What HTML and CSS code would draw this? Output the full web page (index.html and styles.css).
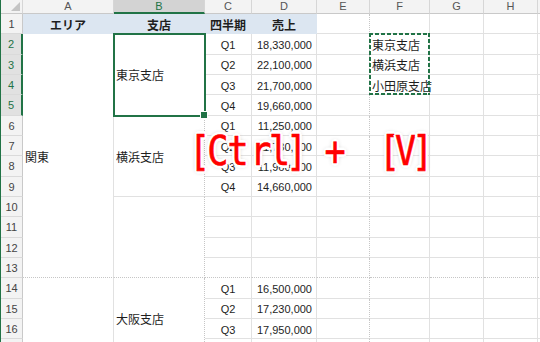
FILE: index.html
```html
<!DOCTYPE html>
<html lang="ja">
<head>
<meta charset="utf-8">
<title>Excel 貼り付け</title>
<link rel="stylesheet" href="styles.css">
</head>
<body>
<div class="sheet">
  <div class="ch corner"></div><div class="ch">A</div><div class="ch on">B</div><div class="ch">C</div><div class="ch">D</div><div class="ch">E</div><div class="ch">F</div><div class="ch">G</div><div class="ch">H</div><div class="ch"></div>

  <div class="rh">1</div><div class="hd">エリア</div><div class="hd">支店</div><div class="hd">四半期</div><div class="hd">売上</div><div class="e"></div><div></div><div></div><div></div><div></div>

  <div class="rh on">2</div><div class="m12 r13">関東</div><div class="m4 b sel">東京支店</div><div class="q">Q1</div><div class="n">18,330,000</div><div class="e"></div><div class="copy">東京支店</div><div></div><div></div><div></div>
  <div class="rh on">3</div><div class="q">Q2</div><div class="n">22,100,000</div><div class="e"></div><div>横浜支店</div><div></div><div></div><div></div>
  <div class="rh on">4</div><div class="q">Q3</div><div class="n">21,700,000</div><div class="e"></div><div>小田原支店</div><div></div><div></div><div></div>
  <div class="rh on">5</div><div class="q">Q4</div><div class="n">19,660,000</div><div class="e"></div><div></div><div></div><div></div><div></div>

  <div class="rh">6</div><div class="m4 b">横浜支店</div><div class="q">Q1</div><div class="n">11,250,000</div><div class="e"></div><div></div><div></div><div></div><div></div>
  <div class="rh">7</div><div class="q">Q2</div><div class="n">11,730,000</div><div class="e"></div><div></div><div></div><div></div><div></div>
  <div class="rh">8</div><div class="q">Q3</div><div class="n">11,960,000</div><div class="e"></div><div></div><div></div><div></div><div></div>
  <div class="rh">9</div><div class="q">Q4</div><div class="n">14,660,000</div><div class="e"></div><div></div><div></div><div></div><div></div>

  <div class="rh">10</div><div class="m4 b r13"></div><div></div><div></div><div class="e"></div><div></div><div></div><div></div><div></div>
  <div class="rh">11</div><div></div><div></div><div class="e"></div><div></div><div></div><div></div><div></div>
  <div class="rh">12</div><div></div><div></div><div class="e"></div><div></div><div></div><div></div><div></div>
  <div class="rh">13</div><div class="r13"></div><div class="r13"></div><div class="e r13"></div><div class="r13"></div><div class="r13"></div><div class="r13"></div><div class="r13"></div>

  <div class="rh">14</div><div class="m4"></div><div class="m4 b">大阪支店</div><div class="q">Q1</div><div class="n">16,500,000</div><div class="e"></div><div></div><div></div><div></div><div></div>
  <div class="rh">15</div><div class="q">Q2</div><div class="n">17,230,000</div><div class="e"></div><div></div><div></div><div></div><div></div>
  <div class="rh">16</div><div class="q">Q3</div><div class="n">17,950,000</div><div class="e"></div><div></div><div></div><div></div><div></div>
  <div class="rh"></div><div class="q"></div><div class="n"></div><div class="e"></div><div></div><div></div><div></div><div></div>
</div>

<div class="keys" aria-label="[Ctrl] + [V]"><span class="w18">[</span><span class="w20">C</span><span class="w23">t</span><span class="w19">r</span><span class="w17">l</span><span class="w15">]</span><span class="plus">+</span><span class="w16 gap">[</span><span class="w17">V</span><span class="w16">]</span></div>
</body>
</html>
```

FILE: styles.css
```css
* { box-sizing: border-box; }
html, body { margin: 0; }
body {
  width: 540px;
  height: 342px;
  overflow: hidden;
  position: relative;
  background: #fff;
  font-family: "Noto Sans CJK JP", sans-serif;
  font-size: 12px;
  color: #1e1e1e;
}

.sheet {
  display: grid;
  grid-template-columns: 22px 91px 91px 47px 65px 53px 60px 54px 54px 1fr;
  grid-template-rows: 14px;
  grid-auto-rows: 20.33px;
  border-left: 1px solid #217346;
}
.sheet > div {
  display: flex;
  align-items: center;
  white-space: nowrap;
  padding: 2px 2px 0;
  line-height: 1;
  border-right: 1px solid #e1e1e1;
  border-bottom: 1px solid #e1e1e1;
}

/* column headers */
.sheet > .ch {
  justify-content: center;
  padding: 0;
  background: #f3f3f3;
  border-right-color: #d6d6d6;
  border-bottom-color: #c9c9c9;
  font-family: "Liberation Sans", sans-serif;
  font-size: 11px;
  color: #555;
}
.sheet > .ch.on {
  background: #d3d3d3;
  color: #217346;
  border-bottom: 2px solid #217346;
}
.sheet > .corner { position: relative; }
.corner::after {
  content: "";
  position: absolute;
  right: 2px;
  bottom: 2px;
  width: 0;
  height: 0;
  border-left: 9px solid transparent;
  border-bottom: 9px solid #c4c4c4;
}

/* row headers */
.sheet > .rh {
  justify-content: center;
  padding: 2px 0 0;
  background: #f3f3f3;
  border-right-color: #c9c9c9;
  border-bottom-color: #dadada;
  font-family: "Liberation Sans", sans-serif;
  font-size: 11px;
  color: #444;
}
.sheet > .rh.on {
  background: #e1e1e1;
  color: #217346;
  border-right: 2px solid #217346;
}

/* heading row */
.sheet > .hd {
  justify-content: center;
  background: #dce6f1;
  border-color: #dce6f1;
  font-weight: bold;
  padding-top: 3px;
}

/* merged cells */
.m12 { grid-row: span 12; }
.m4 { grid-row: span 4; }

.sheet > .q {
  justify-content: center;
  font-family: "Liberation Sans", sans-serif;
  font-size: 11px;
  padding-top: 3px;
}
.sheet > .n {
  justify-content: flex-end;
  padding: 3px 4px 0 0;
  font-family: "Liberation Sans", sans-serif;
  font-size: 11px;
}

/* page breaks */
.sheet > .b, .sheet > .e { border-right: 1px dotted #c6c6c6; }
.sheet > .r13 { border-bottom: 1px dotted #c6c6c6; }

/* selection B2:B5 */
.sheet > .sel {
  position: relative;
  z-index: 2;
  outline: 2px solid #217346;
  outline-offset: -1px;
}
.sel::after {
  content: "";
  position: absolute;
  right: -4px;
  bottom: -4px;
  width: 6px;
  height: 6px;
  background: #217346;
  border: 1px solid #fff;
}

/* copy marquee F2:F4 */
.sheet > .copy { position: relative; }
.copy::before {
  content: "";
  position: absolute;
  left: -1px;
  top: -1px;
  width: 61px;
  height: 62px;
  z-index: 2;
  background:
    repeating-linear-gradient(90deg, #217346 0 4px, transparent 4px 6px) top / 100% 2px no-repeat,
    repeating-linear-gradient(90deg, #217346 0 4px, transparent 4px 6px) bottom / 100% 2px no-repeat,
    repeating-linear-gradient(180deg, #217346 0 4px, transparent 4px 6px) left / 2px 100% no-repeat,
    repeating-linear-gradient(180deg, #217346 0 4px, transparent 4px 6px) right / 2px 100% no-repeat;
}

/* shortcut overlay */
.keys {
  position: absolute;
  left: 188px;
  top: 131px;
  z-index: 5;
  display: flex;
  font-family: "DejaVu Sans Mono", monospace;
  font-size: 40px;
  line-height: 40px;
  color: #f00;
  -webkit-text-stroke: 0.6px #f00;
  text-shadow:
    3px 0 #fff, -3px 0 #fff, 0 3px #fff, 0 -3px #fff,
    2px 2px #fff, -2px -2px #fff, 2px -2px #fff, -2px 2px #fff,
    0 0 6px rgba(0, 0, 0, 0.45);
}
.keys span { display: block; text-align: center; transform: scaleX(0.88); }
.w15 { width: 15px; }
.w16 { width: 16px; }
.w17 { width: 17px; }
.w18 { width: 18px; }
.w19 { width: 19px; }
.w20 { width: 20px; }
.w23 { width: 23px; }
.plus { width: 30px; margin-left: 20px; }
.gap { margin-left: 28px; }
```
